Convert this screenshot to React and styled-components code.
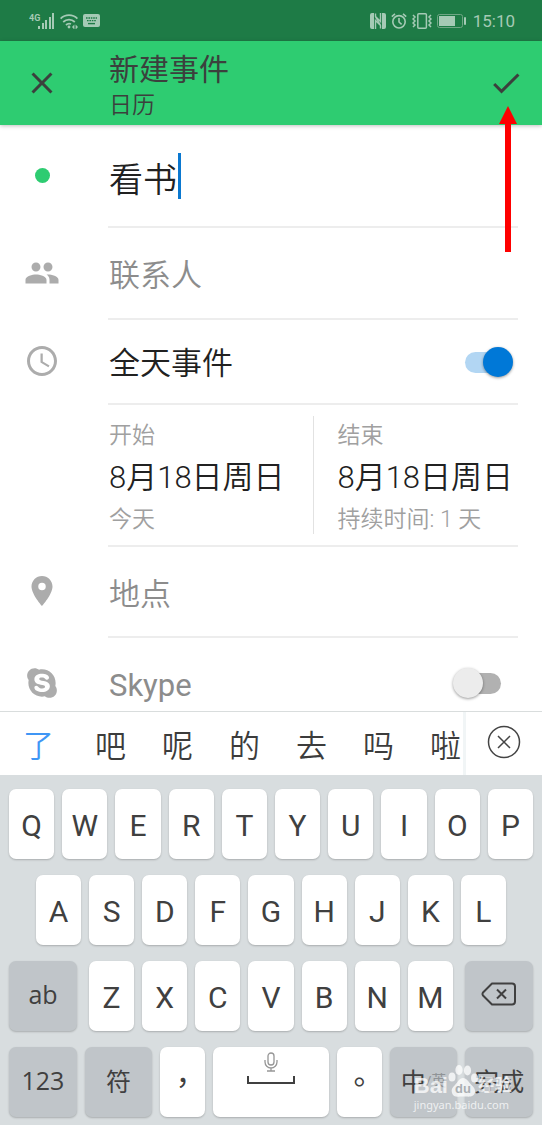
import { useState } from "react";
import styled, { createGlobalStyle } from "styled-components";
import {
  MdAccessTime,
  MdCheck,
  MdClose,
  MdPeople,
  MdPlace,
} from "react-icons/md";
import { FaSkype } from "react-icons/fa";

const GlobalStyle = createGlobalStyle`
  * {
    box-sizing: border-box;
  }
  body {
    margin: 0;
    font-family: Roboto, "Noto Sans CJK SC", sans-serif;
    font-weight: 350;
    color: #212121;
    background: #fff;
  }
  button, input {
    margin: 0;
    padding: 0;
    border: 0;
    background: none;
    color: inherit;
    font: inherit;
  }
`;

const Page = styled.div`
  position: relative;
  display: flex;
  flex-direction: column;
  height: 100vh;
  overflow: hidden;
`;

const StatusBar = styled.div`
  display: flex;
  justify-content: space-between;
  align-items: center;
  flex: none;
  height: 41px;
  padding: 0 27px 0 29px;
  background: #1e7b46;
  color: #a5cab5;
`;
const StatusGroup = styled.div`
  display: flex;
  align-items: center;
  gap: 5px;
`;
const Time = styled.span`
  margin-left: 1px;
  font-size: 17px;
  font-weight: 400;
  line-height: 20px;
`;

const Header = styled.header`
  position: relative;
  display: flex;
  align-items: center;
  flex: none;
  height: 84px;
  background: #2ecc71;
  color: #3b403d;
  box-shadow: 0 1px 4px rgba(0, 0, 0, 0.25);
`;
const HeaderButton = styled.button`
  display: flex;
  justify-content: center;
  align-items: center;
  width: ${({ $width }) => $width};
  height: 100%;
`;
const HeaderText = styled.div`
  flex: 1;
  padding: 5px 0 0 25px;
`;
const Title = styled.h1`
  margin: 0;
  font-size: 30px;
  font-weight: 400;
  line-height: 40px;
`;
const SubTitle = styled.div`
  font-size: 23px;
  line-height: 32px;
`;

const Form = styled.main`
  flex: 1 1 0;
  min-height: 0;
  overflow: hidden;
`;
const Row = styled.div`
  display: flex;
  height: ${({ $height }) => $height};
`;
const IconCell = styled.div`
  display: flex;
  justify-content: center;
  align-items: center;
  flex: none;
  width: 84px;
  padding-bottom: 3px;
  color: #acacac;
`;
const RowBody = styled.div`
  display: flex;
  align-items: center;
  flex: 1;
  min-width: 0;
  margin: 0 24px;
  padding-left: 1px;
  border-bottom: 2px solid #ededed;
`;
const Dot = styled.span`
  width: 15px;
  height: 15px;
  border-radius: 50%;
  background: #2ecc71;
`;
const TitleInput = styled.input`
  height: 46px;
  padding-top: 3px;
  font-size: 34px;
  outline: none;
  caret-color: transparent;
`;
const Caret = styled.span`
  width: 3px;
  height: 46px;
  background: #0a78d0;
`;
const FieldInput = styled.input`
  width: 100%;
  height: 46px;
  padding-top: 5px;
  font-size: 31px;
  outline: none;
  &::placeholder {
    color: #8c8c8c;
    opacity: 1;
  }
`;
const SwitchLabel = styled.label`
  flex: 1;
  padding-top: 5px;
  font-size: 31px;
  font-weight: ${({ $muted }) => ($muted ? 400 : 350)};
  line-height: 46px;
  color: ${({ $muted }) => ($muted ? "#8c8c8c" : "#212121")};
`;
const Switch = styled.input`
  position: relative;
  appearance: none;
  width: 60px;
  height: 30px;
  margin-right: 5px;
  &::before {
    content: "";
    position: absolute;
    left: 12px;
    top: 5px;
    width: 36px;
    height: 21px;
    border-radius: 11px;
    background: #b1b1b1;
  }
  &::after {
    content: "";
    position: absolute;
    left: 0;
    top: 0;
    width: 30px;
    height: 30px;
    border-radius: 50%;
    background: #ececec;
    box-shadow: 0 1px 3px rgba(0, 0, 0, 0.4);
  }
  &:checked::before {
    background: #b2d6f3;
  }
  &:checked::after {
    left: 30px;
    background: #0078d7;
  }
`;
const DateButton = styled.button`
  display: flex;
  flex-direction: column;
  flex: ${({ $grow }) => $grow} 1 0;
  height: 118px;
  padding-top: 3px;
  text-align: left;
  white-space: nowrap;
  & + & {
    padding-left: 23px;
    border-left: 1px solid #e2e2e2;
  }
`;
const DateHint = styled.span`
  font-size: 23px;
  line-height: 34px;
  color: #a0a0a0;
`;
const DateValue = styled.span`
  font-size: 31px;
  line-height: 50px;
`;

const Candidates = styled.div`
  display: flex;
  flex: none;
  height: 64px;
  border-top: 1px solid #d9dddd;
  color: #3c3c3c;
`;
const CandidateList = styled.div`
  display: flex;
  flex: 1;
  min-width: 0;
  overflow: hidden;
  border-right: 3px solid #f1f5f6;
`;
const Candidate = styled.button`
  flex: none;
  width: 67px;
  font-size: 31px;
  &:first-child {
    width: 77px;
    color: #3f96f5;
  }
`;
const CloseCandidates = styled.button`
  display: flex;
  justify-content: center;
  align-items: center;
  width: 76px;
  padding-bottom: 4px;
`;

const Keyboard = styled.div`
  display: flex;
  flex-direction: column;
  flex: none;
  gap: 16px;
  padding: 14px 9px 8px;
  background: #d8dddf;
`;
const KeyRow = styled.div`
  display: flex;
  flex: ${({ $grow }) => $grow || "none"};
  gap: ${({ $gap }) => $gap || "8px"};
  padding: 0 ${({ $inset }) => $inset || "0"};
`;
const Key = styled.button`
  position: relative;
  display: flex;
  justify-content: center;
  align-items: center;
  flex: ${({ $grow }) => $grow || 1} 1 0;
  min-width: 0;
  height: 70px;
  padding-top: 3px;
  border-radius: 7px;
  background: #fff;
  box-shadow: 0 1px 2px rgba(0, 0, 0, 0.22);
  color: #404040;
  font-size: 30px;
  font-weight: 400;
  white-space: nowrap;
`;
const DarkKey = styled(Key)`
  padding: 0 0 5px;
  background: #c0c5c9;
  font-family: "Open Sans", "Noto Sans CJK SC", sans-serif;
  font-size: 25px;
`;
const PunctuationKey = styled(Key)`
  padding: 0 0 5px;
  font-family: "Noto Sans CJK TC", sans-serif;
`;
const SpaceKey = styled(Key)`
  align-items: flex-start;
  padding-top: 5px;
`;
const SmallMode = styled.span`
  font-size: 15px;
  color: #8f9396;
`;

const Arrow = styled.svg`
  position: absolute;
  top: 106px;
  right: 25px;
`;

const Watermark = styled.div`
  position: absolute;
  right: 30px;
  bottom: 12px;
  color: rgba(255, 255, 255, 0.75);
  pointer-events: none;
`;
const WatermarkBrand = styled.div`
  display: flex;
  align-items: flex-end;
  font-family: "Liberation Sans", "Noto Sans CJK SC", sans-serif;
  font-size: 22px;
  font-weight: 700;
  line-height: 22px;
`;
const WatermarkName = styled.span`
  font-size: 17px;
`;
const WatermarkUrl = styled.div`
  font-family: "Noto Sans", sans-serif;
  font-size: 11px;
  font-weight: 400;
  line-height: 16px;
`;

const SignalIcon = () => (
  <svg width="26" height="18" viewBox="0 0 26 18" fill="currentColor">
    <text x="0" y="9" fontSize="9" fontWeight="700" fontFamily="Roboto">
      4G
    </text>
    <rect x="9" y="14" width="2" height="3" />
    <rect x="13" y="11" width="2" height="6" />
    <rect x="16" y="8" width="2" height="9" />
    <rect x="20" y="5" width="2" height="12" />
    <rect x="23" y="1" width="2" height="16" />
  </svg>
);

const WifiIcon = () => (
  <svg
    width="18"
    height="16"
    viewBox="0 0 18 16"
    fill="none"
    stroke="currentColor"
    strokeWidth="1.8"
  >
    <path d="M.6 5.600a12 12 0 0 1 16.800 0M3.200 9a8.400 8.400 0 0 1 11.600 0M6 12a4.600 4.600 0 0 1 5-1" />
    <circle cx="9" cy="14" r="1.4" fill="currentColor" stroke="none" />
    <path
      d="M12 14l2.400-2.600v5.200zM18 14l-2.400-2.600v5.200z"
      fill="currentColor"
      stroke="none"
    />
  </svg>
);

const KeyboardIcon = () => (
  <svg width="17" height="13" viewBox="0 0 17 13">
    <rect width="17" height="13" rx="2" fill="currentColor" />
    <path
      d="M3 4h11M4 6.600h9"
      stroke="#1e7b46"
      strokeWidth="1.4"
      strokeDasharray="1.6 .8"
    />
    <path d="M5 9.600h7" stroke="#1e7b46" strokeWidth="1.4" />
  </svg>
);

const NfcIcon = () => (
  <svg
    width="16"
    height="16"
    viewBox="0 0 16 16"
    fill="none"
    stroke="currentColor"
  >
    <path
      d="M4 0H2Q0 0 0 2v12q0 2 2 2h2zM12 16h2q2 0 2-2V2q0-2-2-2h-2z"
      fill="currentColor"
      stroke="none"
    />
    <path d="M5.500.500v3l5 5V0M10.500 15.500v-3l-5-5V16M5.500 4l5 8" strokeWidth="1.4" />
  </svg>
);

const AlarmIcon = () => (
  <svg
    width="16"
    height="16"
    viewBox="0 0 16 16"
    fill="none"
    stroke="currentColor"
    strokeWidth="1.6"
  >
    <circle cx="8" cy="8.8" r="6.2" />
    <path d="M8 5v4l2.600 2.400M.8 3.600L4 .8M15.200 3.600L12 .8" />
  </svg>
);

const VibrateIcon = () => (
  <svg
    width="20"
    height="16"
    viewBox="0 0 20 16"
    fill="none"
    stroke="currentColor"
    strokeWidth="1.5"
  >
    <rect x="5.8" y=".8" width="8.6" height="14.4" rx="1" />
    <path d="M1 2l2 2-2 2 2 2-2 2 2 2-2 2M19 2l-2 2 2 2-2 2 2 2-2 2 2 2" />
  </svg>
);

const BatteryIcon = () => (
  <svg width="30" height="14" viewBox="0 0 30 14">
    <rect
      x=".5"
      y=".5"
      width="25"
      height="13"
      rx="2"
      fill="none"
      stroke="#6fa685"
    />
    <rect x="2" y="2" width="16" height="10" fill="currentColor" />
    <rect x="27" y="3" width="2" height="8" rx="1" fill="currentColor" />
  </svg>
);

const CircleCloseIcon = () => (
  <svg
    width="34"
    height="34"
    viewBox="0 0 34 34"
    fill="none"
    stroke="#444"
    strokeWidth="1.5"
  >
    <circle cx="17" cy="17" r="15.5" />
    <path d="M11 11l12 12M23 11L11 23" />
  </svg>
);

const BackspaceIcon = () => (
  <svg
    width="36"
    height="24"
    viewBox="0 0 36 24"
    fill="none"
    stroke="#404040"
    strokeWidth="2"
    strokeLinejoin="round"
  >
    <path d="M11 1.500h20q3 0 3 3v15q0 3-3 3H11L2 13.500q-1-1.500 0-3z" />
    <path d="M16 7.500l9 9M25 7.500l-9 9" />
  </svg>
);

const SpaceIcon = () => (
  <svg width="50" height="34" viewBox="0 0 50 34" fill="none">
    <g stroke="#969696" strokeWidth="1.3">
      <rect x="22" y="1" width="6" height="12" rx="3" />
      <path d="M19 8v2a6 6 0 0 0 12 0V8M25 16v3M21 19h8" />
    </g>
    <path d="M2 24v7h46v-7" stroke="#404040" strokeWidth="2" />
  </svg>
);

const PawIcon = () => (
  <svg width="30" height="32" viewBox="0 0 30 32" fill="currentColor">
    <ellipse cx="4" cy="12" rx="3.5" ry="4.5" />
    <ellipse cx="11" cy="5" rx="3.6" ry="5" />
    <ellipse cx="19.5" cy="5.5" rx="3.6" ry="5" />
    <ellipse cx="26.5" cy="13" rx="3.5" ry="4.5" />
    <path d="M15 13c-4 0-5 4-8 7-3 2.500-4 5-3 8 1 4 5 4 8 3.500h6c4 .5 8 0 9-4 .5-3-1-5-3.500-7.500C20.500 17 19 13 15 13z" />
    <text
      x="15"
      y="28"
      textAnchor="middle"
      fontSize="13"
      fontFamily="Liberation Sans"
      fill="#a9afb3"
    >
      du
    </text>
  </svg>
);

const candidates = ["了", "吧", "呢", "的", "去", "吗", "啦"];

const LetterKeys = ({ letters }) =>
  letters.split("").map((letter) => <Key key={letter}>{letter}</Key>);

const App = () => {
  const [title, setTitle] = useState("看书");
  const [allDay, setAllDay] = useState(true);
  const [skype, setSkype] = useState(false);

  return (
    <Page>
      <GlobalStyle />
      <StatusBar>
        <StatusGroup>
          <SignalIcon />
          <WifiIcon />
          <KeyboardIcon />
        </StatusGroup>
        <StatusGroup>
          <NfcIcon />
          <AlarmIcon />
          <VibrateIcon />
          <BatteryIcon />
          <Time>15:10</Time>
        </StatusGroup>
      </StatusBar>
      <Header>
        <HeaderButton $width="84px" aria-label="关闭">
          <MdClose size={36} />
        </HeaderButton>
        <HeaderText>
          <Title>新建事件</Title>
          <SubTitle>日历</SubTitle>
        </HeaderText>
        <HeaderButton $width="72px" aria-label="保存">
          <MdCheck size={36} />
        </HeaderButton>
      </Header>
      <Form>
        <Row $height="103px">
          <IconCell>
            <Dot />
          </IconCell>
          <RowBody>
            <TitleInput
              aria-label="标题"
              value={title}
              onChange={(e) => setTitle(e.target.value)}
              style={{ width: `${title.length + 0.03}em` }}
            />
            <Caret />
          </RowBody>
        </Row>
        <Row $height="92px">
          <IconCell>
            <MdPeople size={36} />
          </IconCell>
          <RowBody>
            <FieldInput aria-label="联系人" placeholder="联系人" />
          </RowBody>
        </Row>
        <Row $height="85px">
          <IconCell>
            <MdAccessTime size={36} />
          </IconCell>
          <RowBody>
            <SwitchLabel htmlFor="all-day">全天事件</SwitchLabel>
            <Switch
              id="all-day"
              type="checkbox"
              checked={allDay}
              onChange={() => setAllDay(!allDay)}
            />
          </RowBody>
        </Row>
        <Row $height="142px">
          <IconCell />
          <RowBody>
            <DateButton $grow={205}>
              <DateHint>开始</DateHint>
              <DateValue>8月18日周日</DateValue>
              <DateHint>今天</DateHint>
            </DateButton>
            <DateButton $grow={181}>
              <DateHint>结束</DateHint>
              <DateValue>8月18日周日</DateValue>
              <DateHint>持续时间: 1 天</DateHint>
            </DateButton>
          </RowBody>
        </Row>
        <Row $height="91px">
          <IconCell>
            <MdPlace size={36} />
          </IconCell>
          <RowBody>
            <FieldInput aria-label="地点" placeholder="地点" />
          </RowBody>
        </Row>
        <Row $height="92px">
          <IconCell>
            <FaSkype size={34} />
          </IconCell>
          <RowBody>
            <SwitchLabel htmlFor="skype" $muted>
              Skype
            </SwitchLabel>
            <Switch
              id="skype"
              type="checkbox"
              checked={skype}
              onChange={() => setSkype(!skype)}
            />
          </RowBody>
        </Row>
      </Form>
      <Candidates>
        <CandidateList>
          {candidates.map((word) => (
            <Candidate key={word}>{word}</Candidate>
          ))}
        </CandidateList>
        <CloseCandidates aria-label="收起">
          <CircleCloseIcon />
        </CloseCandidates>
      </Candidates>
      <Keyboard>
        <KeyRow>
          <LetterKeys letters="QWERTYUIOP" />
        </KeyRow>
        <KeyRow $inset="27px">
          <LetterKeys letters="ASDFGHJKL" />
        </KeyRow>
        <KeyRow $gap="12px">
          <DarkKey $grow={68}>ab</DarkKey>
          <KeyRow $grow="364 1 0">
            <LetterKeys letters="ZXCVBNM" />
          </KeyRow>
          <DarkKey $grow={68} aria-label="删除">
            <BackspaceIcon />
          </DarkKey>
        </KeyRow>
        <KeyRow>
          <DarkKey $grow={68}>123</DarkKey>
          <DarkKey $grow={68}>符</DarkKey>
          <PunctuationKey $grow={45}>，</PunctuationKey>
          <SpaceKey $grow={116} aria-label="空格">
            <SpaceIcon />
          </SpaceKey>
          <PunctuationKey $grow={45}>。</PunctuationKey>
          <DarkKey $grow={68}>
            中<SmallMode>/英</SmallMode>
          </DarkKey>
          <DarkKey $grow={68}>完成</DarkKey>
        </KeyRow>
      </Keyboard>
      <Arrow width="18" height="146" viewBox="0 0 18 146" fill="#fe0000">
        <path d="M9 0l9 18h-6v128H6V18H0z" />
      </Arrow>
      <Watermark>
        <WatermarkBrand>
          Bai
          <PawIcon />
          <WatermarkName>经验</WatermarkName>
        </WatermarkBrand>
        <WatermarkUrl>jingyan.baidu.com</WatermarkUrl>
      </Watermark>
    </Page>
  );
};

export default App;
